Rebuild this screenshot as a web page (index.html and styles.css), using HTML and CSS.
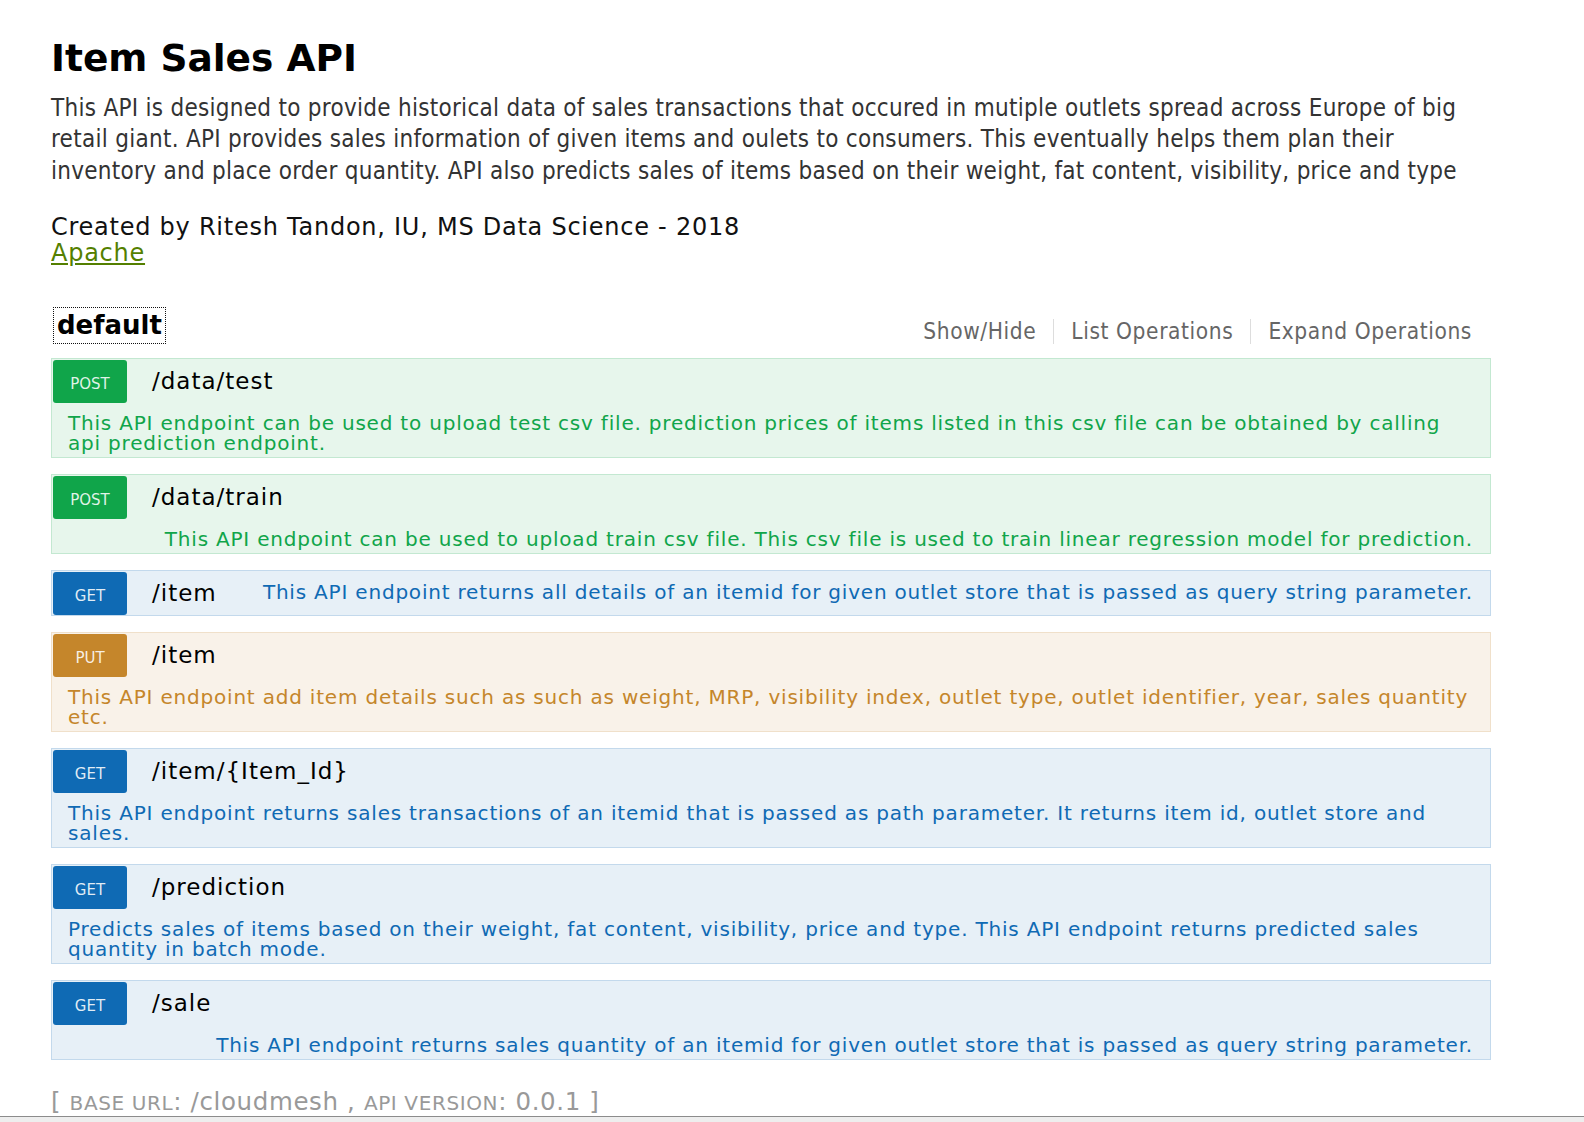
FILE: index.html
```html
<!DOCTYPE html>
<html lang="en">
<head>
<meta charset="utf-8">
<title>Item Sales API</title>
<link rel="stylesheet" href="styles.css">
</head>
<body>
<div class="wrap">
  <div class="info">
    <h1 class="info-title">Item Sales API</h1>
    <p class="info-desc">This API is designed to provide historical data of sales transactions that occured in mutiple outlets spread across Europe of big retail giant. API provides sales information of given items and oulets to consumers. This eventually helps them plan their inventory and place order quantity. API also predicts sales of items based on their weight, fat content, visibility, price and type</p>
    <div class="info-line">Created by Ritesh Tandon, IU, MS Data Science - 2018</div>
    <div class="info-line"><a class="license" href="#">Apache</a></div>
  </div>

  <div class="resource">
    <div class="res-head">
      <h2 class="res-title"><a href="#" class="res-link">default</a></h2>
      <ul class="res-options">
        <li><a href="#">Show/Hide</a></li>
        <li><a href="#">List Operations</a></li>
        <li><a href="#">Expand Operations</a></li>
      </ul>
    </div>

    <ul class="ops">
      <li class="op post">
        <div class="op-head">
          <div class="mp"><span class="method">post</span><span class="path">/data/test</span></div>
          <div class="op-desc">This API endpoint can be used to upload test csv file. prediction prices of items listed in this csv file can be obtained by calling api prediction endpoint.</div>
        </div>
      </li>
      <li class="op post">
        <div class="op-head">
          <div class="mp"><span class="method">post</span><span class="path">/data/train</span></div>
          <div class="op-desc">This API endpoint can be used to upload train csv file. This csv file is used to train linear regression model for prediction.</div>
        </div>
      </li>
      <li class="op get">
        <div class="op-head">
          <div class="mp"><span class="method">get</span><span class="path">/item</span></div>
          <div class="op-desc">This API endpoint returns all details of an itemid for given outlet store that is passed as query string parameter.</div>
        </div>
      </li>
      <li class="op put">
        <div class="op-head">
          <div class="mp"><span class="method">put</span><span class="path">/item</span></div>
          <div class="op-desc">This API endpoint add item details such as such as weight, MRP, visibility index, outlet type, outlet identifier, year, sales quantity etc.</div>
        </div>
      </li>
      <li class="op get">
        <div class="op-head">
          <div class="mp"><span class="method">get</span><span class="path">/item/{Item_Id}</span></div>
          <div class="op-desc">This API endpoint returns sales transactions of an itemid that is passed as path parameter. It returns item id, outlet store and sales.</div>
        </div>
      </li>
      <li class="op get">
        <div class="op-head">
          <div class="mp"><span class="method">get</span><span class="path">/prediction</span></div>
          <div class="op-desc">Predicts sales of items based on their weight, fat content, visibility, price and type. This API endpoint returns predicted sales quantity in batch mode.</div>
        </div>
      </li>
      <li class="op get">
        <div class="op-head">
          <div class="mp"><span class="method">get</span><span class="path">/sale</span></div>
          <div class="op-desc">This API endpoint returns sales quantity of an itemid for given outlet store that is passed as query string parameter.</div>
        </div>
      </li>
    </ul>
  </div>

  <div class="footer">[ <span class="sc">BASE URL</span>: /cloudmesh , <span class="sc">API VERSION</span>: 0.0.1 ]</div>
</div>
<div class="hbar"></div>
</body>
</html>
```

FILE: styles.css
```css
html, body {
  margin: 0;
  padding: 0;
  background: #ffffff;
}

body {
  font-family: "DejaVu Sans", "Liberation Sans", sans-serif;
  color: #000;
}

.wrap {
  margin-left: 51px;
  width: 1440px;
}

.info-title {
  margin: 36px 0 0 0;
  font-size: 37.5px;
  line-height: 44px;
  font-weight: bold;
  color: #000;
}

.info-desc {
  margin: 12.5px 0 0 0;
  font-family: "DejaVu Sans Condensed", "DejaVu Sans", sans-serif;
  font-stretch: condensed;
  font-size: 24px;
  line-height: 31.8px;
  letter-spacing: 0.28px;
  color: #333;
}

.info-line {
  font-size: 24px;
  line-height: 26px;
  letter-spacing: 0.75px;
  color: #111;
}

.info-desc + .info-line {
  margin-top: 26px;
}

.license {
  color: #547f00;
  text-decoration: underline;
}

.resource {
  margin-top: 42px;
}

.res-head {
  display: flex;
  justify-content: space-between;
  align-items: flex-start;
  height: 50px;
}

.res-title {
  margin: 0 0 0 3px;
  font-size: 26px;
  font-weight: bold;
  line-height: 35px;
}

.res-link {
  display: inline-block;
  padding: 0 3px;
  color: #000;
  text-decoration: none;
  outline: 1px dotted #111;
}

.res-options {
  list-style: none;
  margin: 11px 19px 0 0;
  padding: 0;
  display: flex;
}

.res-options li {
  padding: 0 17px;
  border-left: 1px solid #dddddd;
  font-family: "DejaVu Sans Condensed", "DejaVu Sans", sans-serif;
  font-stretch: condensed;
  font-size: 22.5px;
  line-height: 25px;
  letter-spacing: 0.6px;
}

.res-options li:first-child {
  border-left: none;
}

.res-options li:last-child {
  padding-right: 0;
}

.res-options a {
  color: #666666;
  text-decoration: none;
}

.ops {
  list-style: none;
  margin: 0;
  padding: 0;
}

.op {
  margin: 0 0 16px 0;
  border: 1px solid;
}

.op-head {
  display: flex;
  flex-wrap: wrap;
  align-items: flex-start;
  padding: 1px 1px 0 1px;
}

.mp {
  display: flex;
  align-items: flex-start;
  flex: 0 0 auto;
}

.method {
  display: block;
  width: 74px;
  height: 30px;
  padding-top: 13px;
  border-radius: 3px;
  text-align: center;
  text-transform: uppercase;
  font-size: 15px;
  line-height: 22px;
  color: rgba(255, 255, 255, 0.88);
}

.path {
  display: block;
  padding: 0 12px 0 25px;
  font-size: 23px;
  line-height: 43px;
  letter-spacing: 1px;
  color: #000;
}

.op-desc {
  margin-left: auto;
  padding: 10px 16px 4px 15px;
  font-size: 20px;
  line-height: 20px;
  letter-spacing: 0.8px;
}

.op.post {
  background: #e7f6ec;
  border-color: #c3e8d1;
}
.op.post .method { background: #10a54a; }
.op.post .op-desc { color: #10a54a; }

.op.get {
  background: #e7f0f7;
  border-color: #c3d9ec;
}
.op.get .method { background: #0f6ab4; }
.op.get .op-desc { color: #0f6ab4; }

.op.put {
  background: #f9f2e9;
  border-color: #f0e0ca;
}
.op.put .method { background: #c5862b; }
.op.put .op-desc { color: #c5862b; }

.footer {
  margin-top: 27.5px;
  font-size: 24.5px;
  line-height: 30px;
  letter-spacing: 0.62px;
  color: #999999;
}

.sc {
  font-size: 20px;
}

.hbar {
  position: fixed;
  left: 0;
  right: 0;
  bottom: 0;
  height: 5px;
  border-top: 1px solid #8c8c8c;
  background: #eeeeee;
}
```
